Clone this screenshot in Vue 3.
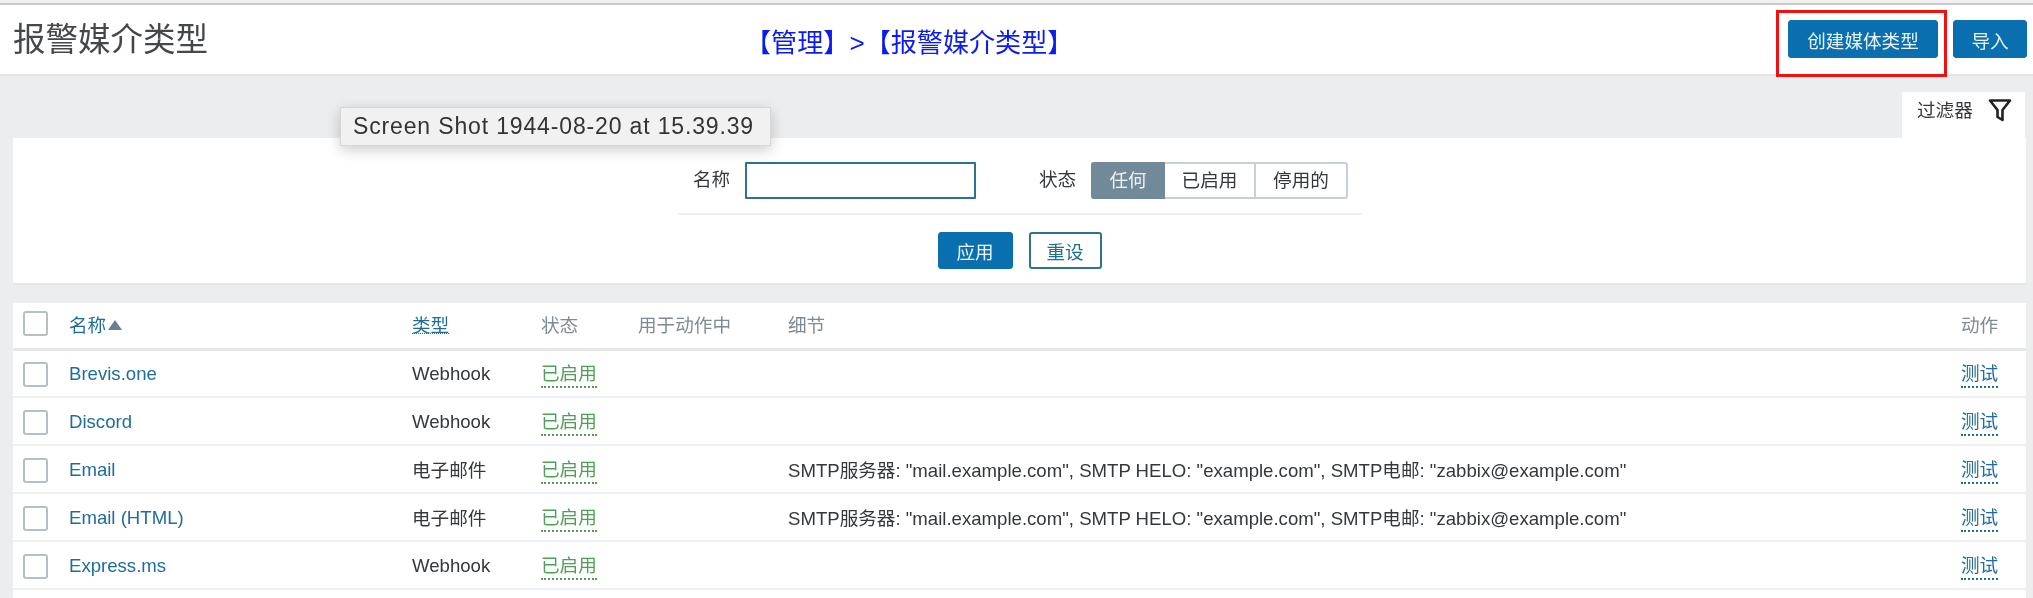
<script setup>
const rows = [
  { name: 'Brevis.one', type: 'Webhook', detail: '' },
  { name: 'Discord', type: 'Webhook', detail: '' },
  { name: 'Email', type: '电子邮件', detail: 'SMTP服务器: "mail.example.com", SMTP HELO: "example.com", SMTP电邮: "zabbix@example.com"' },
  { name: 'Email (HTML)', type: '电子邮件', detail: 'SMTP服务器: "mail.example.com", SMTP HELO: "example.com", SMTP电邮: "zabbix@example.com"' },
  { name: 'Express.ms', type: 'Webhook', detail: '' }
]
</script>

<template>
  <div class="page">
    <header class="head">
      <h1 class="title">报警媒介类型</h1>
      <div class="crumb">【管理】&gt;【报警媒介类型】</div>
      <div class="head-actions">
        <button class="btn primary create">创建媒体类型</button>
        <button class="btn primary import">导入</button>
      </div>
      <div class="red-box"></div>
    </header>

    <main class="content">
      <div class="tab-row">
        <div class="tab">
          <span>过滤器</span>
          <svg class="funnel" width="24" height="24" viewBox="0 0 24 24" fill="none" stroke="#222" stroke-width="2.6" stroke-linejoin="round">
            <path d="M2 2.5h20l-7.5 9.5v10l-5-3v-7z" />
          </svg>
        </div>
      </div>
      <section class="filter">
        <div class="filter-fields">
          <label class="lbl name-lbl">名称</label>
          <input class="name-input" type="text" />
          <label class="lbl status-lbl">状态</label>
          <div class="seg">
            <span class="on any">任何</span>
            <span class="en">已启用</span>
            <span class="dis">停用的</span>
          </div>
        </div>
        <div class="filter-btns">
          <button class="btn primary apply">应用</button>
          <button class="btn ghost">重设</button>
        </div>
      </section>

      <section class="list">
        <div class="row headrow">
          <span class="check"></span>
          <span class="link-h">名称<i class="arrow"></i></span>
          <span class="type-h">类型</span>
          <span>状态</span>
          <span>用于动作中</span>
          <span>细节</span>
          <span class="act">动作</span>
        </div>
        <div v-for="r in rows" :key="r.name" class="row body">
          <span class="check"></span>
          <a class="link">{{ r.name }}</a>
          <span class="cell" :class="{ cjk: r.type !== 'Webhook' }">{{ r.type }}</span>
          <span class="nudge"><span class="green">已启用</span></span>
          <span></span>
          <span class="cell cjk detail">{{ r.detail }}</span>
          <span class="act nudge"><span class="test">测试</span></span>
        </div>
      </section>
    </main>

    <div class="tooltip">Screen Shot 1944-08-20 at 15.39.39</div>
  </div>
</template>

<style>
html, body { margin: 0; background: #ebedef; }
</style>

<style scoped>
.page {
  position: relative;
  width: 2033px;
  height: 598px;
  overflow: hidden;
  background: #ebedef;
  font-family: "Liberation Sans", "Noto Sans CJK SC", sans-serif;
  font-size: 18.6px;
  color: #34383b;
  border-top: 3px solid #f1f1f1;
  box-sizing: border-box;
  filter: blur(0.6px);
}
.head {
  position: relative;
  display: flex;
  align-items: flex-start;
  height: 73px;
  background: #fff;
  border-top: 2px solid #c9c9c9;
  border-bottom: 2px solid #e3e5e7;
  box-sizing: border-box;
  padding-left: 13px;
}
.title {
  margin: 13px 0 0;
  font-size: 32.5px;
  font-weight: 400;
  line-height: 44px;
  color: #45484a;
}
.crumb {
  margin: 21px 0 0 537px;
  font-size: 26.1px;
  line-height: 34px;
  color: #0a1cf0;
}
.head-actions {
  margin-left: auto;
  margin-right: 6px;
  margin-top: 15px;
  display: flex;
  gap: 15px;
}
.btn {
  height: 38px;
  box-sizing: border-box;
  border-radius: 3px;
  font: inherit;
  padding: 0;
  cursor: pointer;
}
.primary {
  background: #0a6fae;
  border: 1px solid #0a6fae;
  color: #e9f3f8;
}
.create { width: 150px; }
.import { width: 74px; }
.red-box {
  position: absolute;
  left: 1776px;
  top: 5px;
  width: 171px;
  height: 67px;
  border: 3px solid #f01010;
  box-sizing: border-box;
}
.content { padding: 0 7px 0 13px; }
.tab-row {
  display: flex;
  justify-content: flex-end;
  padding: 16px 1px 0 0;
}
.tab {
  width: 123px;
  height: 46px;
  background: #fff;
  box-sizing: border-box;
  padding: 6px 13px 0 15px;
  display: flex;
  justify-content: space-between;
  align-items: flex-start;
  line-height: 26px;
}
.filter {
  height: 147px;
  background: #fff;
  box-sizing: border-box;
  border-bottom: 2px solid #e3e5e7;
  margin-bottom: 18px;
}
.filter-fields {
  width: 684px;
  height: 77px;
  margin-left: 665px;
  box-sizing: border-box;
  padding-top: 24px;
  display: flex;
  align-items: flex-start;
  border-bottom: 2px solid #eceef0;
}
.lbl { line-height: 35px; color: #34383b; }
.name-lbl { margin-left: 15px; width: 52px; }
.name-input {
  width: 231px;
  height: 37px;
  box-sizing: border-box;
  border: 2px solid #2d7391;
  background: #fff;
  border-radius: 1px;
  outline: none;
  padding: 0;
}
.status-lbl { margin-left: 63px; width: 52px; }
.seg {
  display: flex;
  height: 37px;
  width: 257px;
  box-sizing: border-box;
  border: 2px solid #c8d0d5;
  border-radius: 3px;
  line-height: 33px;
  text-align: center;
}
.seg span { display: block; box-sizing: border-box; }
.seg .any { width: 74px; background: #728999; color: #eef2f4; margin: -2px 0 -2px -2px; line-height: 37px; border-radius: 3px 0 0 3px; }
.seg .en { width: 91px; border-right: 2px solid #c8d0d5; }
.seg .dis { flex: 1; }
.filter-btns {
  display: flex;
  justify-content: center;
  gap: 16px;
  margin-top: 17px;
}
.apply { width: 75px; height: 37px; }
.ghost {
  width: 73px;
  height: 37px;
  background: #fff;
  border: 2px solid #2d7391;
  color: #1f6d8f;
}
.list { background: #fff; height: 295px; }
.row {
  display: grid;
  grid-template-columns: 56px 343px 129px 97px 150px 1fr 65px;
  align-items: center;
  height: 48px;
  box-sizing: border-box;
  border-bottom: 2px solid #eef0f2;
}
.row.body { padding-top: 2px; }
.row.body:nth-child(2) { height: 47px; padding-top: 1px; }
.headrow {
  height: 48px;
  padding-bottom: 5px;
  border-bottom: 3px solid #e6e8ea;
  color: #7d8b94;
}
.check {
  display: block;
  width: 25px;
  height: 25px;
  margin-left: 10px;
  box-sizing: border-box;
  border: 2px solid #b4bfc6;
  border-radius: 3px;
  background: #fff;
}
.link-h { color: #1f6d96; display: flex; align-items: center; }
.type-h { color: #1f6d96; text-decoration: underline dotted 1px; text-underline-offset: 1px; }
.arrow {
  width: 0;
  height: 0;
  margin: 3px 0 0 2px;
  border-left: 7px solid transparent;
  border-right: 7px solid transparent;
  border-bottom: 10px solid #68808f;
}
.link { color: #1f6d9c; }
.cell { color: #34383b; }
.cjk { margin-bottom: 4px; }
.nudge { margin-top: 2px; }
.detail { white-space: nowrap; }
.green {
  color: #4f9f54;
  border-bottom: 2px dotted #4f9f54;
  display: inline-block;
  line-height: 24px;
}
.headrow .act { color: #7d8b94; }
.test {
  color: #1f6d9c;
  border-bottom: 2px dotted #1f6d9c;
  display: inline-block;
  line-height: 24px;
}
.tooltip {
  position: absolute;
  left: 340px;
  top: 104px;
  width: 431px;
  height: 39px;
  box-sizing: border-box;
  padding-left: 12px;
  line-height: 37px;
  background: #f1f1f1;
  border: 1px solid #d6d6d6;
  box-shadow: 0 4px 14px rgba(0, 0, 0, 0.2);
  font-family: "Liberation Sans", sans-serif;
  font-size: 23px;
  letter-spacing: 0.85px;
  color: #333;
  white-space: nowrap;
}
</style>
